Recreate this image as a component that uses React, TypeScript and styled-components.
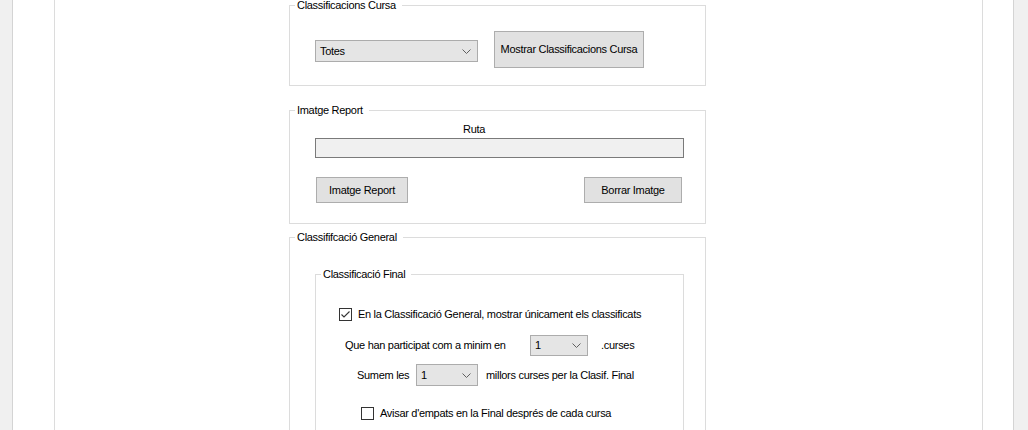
import React from 'react';
import styled, { createGlobalStyle } from 'styled-components';

const Global = createGlobalStyle`
  *, *::before, *::after { box-sizing: border-box; }
  html, body { margin: 0; padding: 0; background: #f0f0f0; }
  body {
    font-family: "Liberation Sans", Arial, sans-serif;
    font-size: 11px;
    letter-spacing: -0.3px;
    color: #000;
  }
`;

const Screen = styled.div`
  height: 430px;
  overflow: hidden;
  padding-left: 12px;
  display: flex;
`;

const OuterPanel = styled.div`
  width: 1002px;
  height: 100%;
  background: #fff;
  border-left: 1px solid #d4d4d4;
  border-right: 1px solid #d4d4d4;
  padding-left: 41px;
`;

const InnerPanel = styled.div`
  width: 929px;
  height: 100%;
  border-left: 1px solid #dcdcdc;
  border-right: 1px solid #dcdcdc;
  padding-left: 234px;
`;

const Column = styled.div`
  width: 417px;
  display: flex;
  flex-direction: column;
`;

const Group = styled.fieldset<{ $mt?: number; $ml?: number; $w?: number }>`
  margin: ${p => p.$mt ?? 0}px 0 0 ${p => p.$ml ?? 0}px;
  padding: 0;
  min-width: 0;
  width: ${p => (p.$w ? `${p.$w}px` : 'auto')};
  border: 1px solid #dcdcdc;
`;

const Legend = styled.legend`
  margin-left: 5px;
  padding: 0 6px 0 2px;
  font-size: 11px;
  line-height: 11px;
`;

const ComboRow = styled.div`
  display: flex;
  align-items: flex-start;
  padding: 20px 0 17px 25px;
  gap: 16px;
`;

const Combo = styled.div<{ $w: number; $h?: number; $mt?: number }>`
  width: ${p => p.$w}px;
  height: ${p => p.$h ?? 21}px;
  margin-top: ${p => p.$mt ?? 0}px;
  flex: none;
  display: flex;
  align-items: center;
  justify-content: space-between;
  padding: 0 6px 0 4px;
  background: #e5e5e5;
  border: 1px solid #acacac;
  line-height: 13px;
`;

const Button = styled.div<{ $w: number; $h: number }>`
  width: ${p => p.$w}px;
  height: ${p => p.$h}px;
  flex: none;
  display: flex;
  align-items: center;
  justify-content: center;
  background: #e1e1e1;
  border: 1px solid #adadad;
  line-height: 13px;
  white-space: nowrap;
`;

const Caption = styled.div<{ $pl: number }>`
  margin-top: 7px;
  padding-left: ${p => p.$pl}px;
  line-height: 13px;
`;

const TextBox = styled.div`
  margin: 2px 0 0 25px;
  width: 369px;
  height: 20px;
  background: #f0f0f0;
  border: 1px solid #7a7a7a;
`;

const ButtonRow = styled.div`
  margin: 19px 0 20px 26px;
  width: 366px;
  display: flex;
  justify-content: space-between;
`;

const Spacer = styled.div`
  height: 80px;
`;

const Row = styled.div<{ $mt: number; $pl: number }>`
  display: flex;
  align-items: center;
  margin-top: ${p => p.$mt}px;
  padding-left: ${p => p.$pl}px;
  line-height: 13px;
`;

const Label = styled.span<{ $w?: number; $ml?: number }>`
  display: inline-block;
  flex: none;
  width: ${p => (p.$w ? `${p.$w}px` : 'auto')};
  margin-left: ${p => p.$ml ?? 0}px;
  white-space: nowrap;
`;

const Box = styled.span`
  width: 13px;
  height: 13px;
  flex: none;
  display: flex;
  align-items: center;
  justify-content: center;
  background: #fff;
  border: 1px solid #333;
`;

const Chevron = () => (
  <svg width="9" height="5" viewBox="0 0 9 5">
    <polyline points="0.5,0.5 4.5,4.5 8.5,0.5" fill="none" stroke="#606060" strokeWidth="1" />
  </svg>
);

const CheckBox: React.FC<{ checked?: boolean }> = ({ checked }) => (
  <Box>
    {checked && (
      <svg width="11" height="11" viewBox="0 0 11 11">
        <polyline points="1.5,5.5 4,8 9.5,2.5" fill="none" stroke="#333" strokeWidth="1.1" />
      </svg>
    )}
  </Box>
);

export default function App() {
  return (
    <>
      <Global />
      <Screen>
        <OuterPanel>
          <InnerPanel>
            <Column>
              <Group>
                <Legend>Classificacions Cursa</Legend>
                <ComboRow>
                  <Combo $w={163} $h={22} $mt={9}>
                    <span>Totes</span>
                    <Chevron />
                  </Combo>
                  <Button $w={150} $h={37}>Mostrar Classificacions Cursa</Button>
                </ComboRow>
              </Group>

              <Group $mt={19}>
                <Legend>Imatge Report</Legend>
                <Caption $pl={173}>Ruta</Caption>
                <TextBox />
                <ButtonRow>
                  <Button $w={92} $h={26}>Imatge Report</Button>
                  <Button $w={98} $h={26}>Borrar Imatge</Button>
                </ButtonRow>
              </Group>

              <Group $mt={8}>
                <Legend>Classififcació General</Legend>
                <Group $mt={26} $ml={25} $w={369}>
                  <Legend>Classificació Final</Legend>
                  <Row $mt={28} $pl={23}>
                    <CheckBox checked />
                    <Label $ml={6}>En la Classificació General, mostrar únicament els classificats</Label>
                  </Row>
                  <Row $mt={14} $pl={29}>
                    <Label $w={185}>Que han participat com a minim en</Label>
                    <Combo $w={58}>
                      <span>1</span>
                      <Chevron />
                    </Combo>
                    <Label $ml={13}>.curses</Label>
                  </Row>
                  <Row $mt={8} $pl={41}>
                    <Label $w={59}>Sumem les</Label>
                    <Combo $w={62} $h={22}>
                      <span>1</span>
                      <Chevron />
                    </Combo>
                    <Label $ml={8}>millors curses per la Clasif. Final</Label>
                  </Row>
                  <Row $mt={21} $pl={45}>
                    <CheckBox />
                    <Label $ml={6}>Avisar d'empats en la Final després de cada cursa</Label>
                  </Row>
                  <Spacer />
                </Group>
                <Spacer />
              </Group>
            </Column>
          </InnerPanel>
        </OuterPanel>
      </Screen>
    </>
  );
}
